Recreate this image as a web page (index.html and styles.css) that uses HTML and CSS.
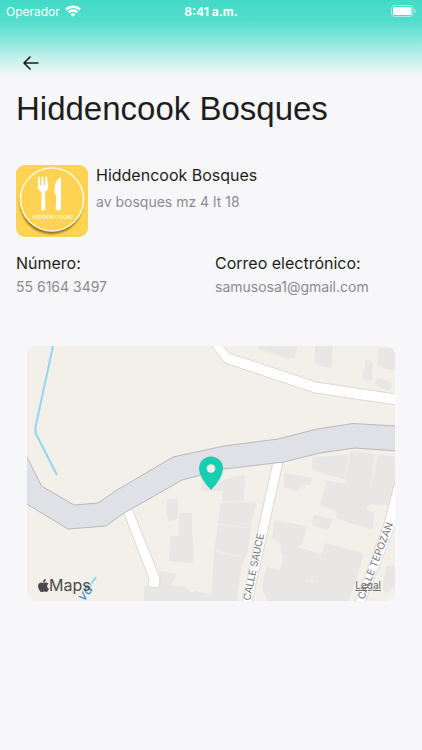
FILE: index.html
```html
<!DOCTYPE html>
<html lang="es">
<head>
<meta charset="utf-8">
<meta name="viewport" content="width=device-width, initial-scale=1">
<title>Hiddencook Bosques</title>
<link rel="stylesheet" href="styles.css">
</head>
<body>
<header class="top">
  <div class="status">
    <div class="carrier">
      <span>Operador</span>
      <svg width="16" height="12" viewBox="0 0 16 12" fill="none" stroke="#fff" stroke-width="2.4" aria-hidden="true">
        <path d="M1 4.6a10 10 0 0 1 14 0M3.6 7.3a6.2 6.2 0 0 1 8.8 0"/>
        <path d="M5.6 9.3a3.4 3.4 0 0 1 4.8 0L8 11.8z" fill="#fff" stroke="none"/>
      </svg>
    </div>
    <time class="clock">8:41 a.m.</time>
    <svg class="battery" width="25" height="12" viewBox="0 0 25 12" aria-hidden="true">
      <rect x=".5" y=".5" width="21.5" height="11" rx="3" fill="none" stroke="#fff" stroke-opacity=".5"/>
      <rect x="2" y="2" width="18.5" height="8" rx="1.6" fill="#fff"/>
      <path d="M23.3 4q1.4.6 1.4 2t-1.4 2z" fill="#fff" fill-opacity=".6"/>
    </svg>
  </div>
  <button class="back" type="button" aria-label="Volver">
    <svg width="16" height="14" viewBox="0 0 16 14" fill="none" stroke="#1c1c1e" stroke-width="1.6" stroke-linecap="round" stroke-linejoin="round"><path d="M15 7H1M7 1 1 7l6 6"/></svg>
  </button>
</header>
<main>
  <h1>Hiddencook Bosques</h1>
  <section class="place">
    <svg class="logo" width="72" height="72" viewBox="0 0 72 72" role="img" aria-label="Hidden Cook">
      <defs>
        <filter id="soft" x="-20%" y="-20%" width="140%" height="140%"><feGaussianBlur stdDeviation="1.3"/></filter>
        <clipPath id="tile"><rect width="72" height="72" rx="9"/></clipPath>
      </defs>
      <g clip-path="url(#tile)">
        <rect width="72" height="72" fill="#fed354"/>
        <circle cx="35.5" cy="37.5" r="31.5" fill="#8b6a10" filter="url(#soft)"/>
        <path d="M0 0h72v34H0z" fill="#fed354" opacity=".7"/>
        <circle cx="36" cy="34.5" r="31.5" fill="#fed354" stroke="#fff6d2" stroke-width="1.7"/>
      </g>
      <path fill="#fff" d="M22 12q.8-1.2 1.6 0l.5 8h1.2l.3-8q.9-1.2 1.8 0l.3 8h1.2l.5-8q.8-1.2 1.6 0l1.2 9.500q0 4.300-3.300 5.200l.6 17.500q-2.200 2.600-4.400 0l.6-17.500q-3.900-.9-3.900-5.200zM45 12q-6.500 2.500-6.700 15l2 4-.6 13.200q2.500 2.600 5.300 0z"/>
      <text class="logo-text" x="36.500" y="54" text-anchor="middle">HIDDEN COOK!</text>
    </svg>
    <div>
      <h2>Hiddencook Bosques</h2>
      <p>av bosques mz 4 lt 18</p>
    </div>
  </section>
  <dl class="contact">
    <div><dt>Número:</dt><dd>55 6164 3497</dd></div>
    <div><dt>Correo electrónico:</dt><dd>samusosa1@gmail.com</dd></div>
  </dl>
  <section class="map" aria-label="Mapa">
    <svg class="streets" viewBox="27 346 368 255">
      <rect x="27" y="346" width="368" height="255" fill="#f3f0e9"/>
      <g fill="#e9e7e5" stroke="#e9e7e5" stroke-width="4" stroke-linejoin="round">
        <path d="M260 347h35l-2 9-6 0zM317 347h14l-1 19-13-3zM380 350h13v18l-14-3zM367 362l4 2-1 15-5-1zM379 380l12 4-3 4-11-4z"/>
        <path d="M225 482l18-5-1 22-18 1zM222 505l32-1-4 16-4 30-7 18-4 33h-22l3-49 4-27zM203 472h17l1 17h-17z"/>
        <path d="M169 501h7v16l-6 2-1-7zM181 515h9v21h-9zM172 538h19v23l-20-2zM161 573l13 2-5 11-8-2zM146 588h38l7 7 5-2 16 4v6h-66z"/>
        <path d="M286 475l24 4-1 4-11 1-1 5-11-3zM314 459l32-2-1 20-31-8zM352 453l21 3-2 32-24-3zM379 457l17 2v20l-8 24-20-1-5 8 9 4-1 13-33-10 1-8-17-5 6-21 46 6z"/>
        <path d="M276 522l29 6-4 14-7 5-20-9zM315 517l15 4-3 7-13-4zM283 544l39 13 5-12 34 10-2 9-13 39h-75l-7-15 4-19 14 4 3-17-3-6zM388 568l6-1v18l-8 6-1-5z"/>
      </g>
      <g fill="none" stroke="#f1eee9" stroke-width="1"><path d="M218 524l30 4M216 551l26 6M349 456l-5 28M375 457l-4 31M312 575v11M307 581h11M322 557l-2 3"/></g>
      <path d="M53 346L35.500 427v6L57 475" fill="none" stroke="#8fd7f2" stroke-width="2"/>
      <g fill="#fff" stroke="#d5d2ce" stroke-width=".8">
        <path d="M211 345l14 18 90 30 81 12V394l-80-12-87-29-7-8z"/>
        <path d="M123 511l26 68-1 8 11 1 1-10-29-72z"/>
        <path d="M273 462l-31 140h10l31-140z"/>
        <path d="M396 478l-12 46-29 78h10l31-78z"/>
      </g>
      <path d="M26 455l15.500 31L74 505l24-2 19-13 56-33 51-11 54-7 39-10 36-5.500 43 2.500v25l-41-3-35 5-36 9-60 7-42 11-26 15-32 18-18 13-38 3-43-26z" fill="#e0e1e6" stroke="#b9b9bc" stroke-width="1"/>
      <path d="M96 577l-9 13" stroke="#8fd7f2" stroke-width="2"/>
      <g class="street-name">
        <text transform="translate(250 601) rotate(-78)">CALLE SAUCE</text>
        <text transform="translate(364 600) rotate(-69)">CALLE TEPOZÁN</text>
        <text class="river" transform="translate(84 602) rotate(-54)">va</text>
      </g>
      <path d="M211 490q-12-12.500-12-21.500a12 12 0 0 1 24 0q0 9-12 21.500z" fill="#18cdb0"/>
      <circle cx="211" cy="468.500" r="4.300" fill="#eeeeeb"/>
    </svg>
    <div class="map-footer">
      <span class="brand"><svg width="11" height="13" viewBox="0 0 22 26" fill="#4b4b4d" aria-hidden="true"><path d="M15.500 0q.4 3-1.500 5t-4 2q-.4-3 1.500-5t4-2zM11 8q1 0 3-.8 4.500-1.300 7 2.300-3 2-2.800 5 .2 3.600 3.800 5-2 6-5 6.500-1.200 0-2.500-.6-2.300-.9-4.300 0Q7 26.800 5 25.400 0 20.800 0 14.500q.2-6.500 6-7.500 1.200-.1 3 .6 1.500.5 2 .4z"/></svg>Maps</span>
      <a href="#">Legal</a>
    </div>
  </section>
</main>
</body>
</html>
```
FILE: styles.css
```css
* { box-sizing: border-box; }
body {
  margin: 0;
  min-height: 100vh;
  background: #f7f7fa;
  color: #1e1e20;
  font-family: Inter, "Liberation Sans", sans-serif;
}
h1, h2, p, dl, dd { margin: 0; font-weight: 400; }
.top {
  background: linear-gradient(#43dac7 0, #50ddcb 20px, #87e8db 40px, #c3f0eb 58px, #eef5f7 74px, #f7f7fa 84px);
}
.status {
  display: grid;
  grid-template-columns: 1fr auto 1fr;
  align-items: center;
  height: 22px;
  padding: 0 6px;
  color: #fff;
  font-size: 12px;
}
.carrier { display: flex; align-items: center; gap: 5px; }
.clock { font-weight: 700; }
.battery { justify-self: end; }
.back {
  display: flex;
  align-items: center;
  justify-content: center;
  width: 32px;
  height: 32px;
  margin: 25px 0 0 15px;
  padding: 0;
  border: 0;
  background: none;
}
main { padding: 8px 16px 24px; }
h1 { font-family: "Liberation Sans", sans-serif; font-size: 33px; line-height: 44px; }
.place {
  display: flex;
  gap: 8px;
  margin-top: 34px;
}
.logo { flex: none; }
.logo-text { fill: #fff3c4; font: 700 6px Roboto, sans-serif; }
h2, dt { font-size: 16px; line-height: 20px; }
p, dd { color: #8c8c90; font-size: 14px; line-height: 24px; }
.place p { margin-top: 5px; }
.contact {
  display: grid;
  grid-template-columns: 1fr 1fr;
  gap: 8px;
  margin-top: 16px;
}
.contact dd { margin-top: 2px; }
.map {
  position: relative;
  margin: 47px 11px 0;
  overflow: hidden;
  border-radius: 9px;
}
.streets { display: block; width: 100%; }
.street-name { fill: #78787b; font-size: 10px; }
.street-name text { paint-order: stroke; stroke: #fff; stroke-width: 1px; }
.street-name .river { fill: #4b86c6; stroke: none; font-size: 14px; font-style: italic; }
.map-footer {
  position: absolute;
  inset: auto 14px 6px 11px;
  display: flex;
  align-items: center;
  justify-content: space-between;
}
.brand { display: flex; align-items: center; color: #4b4b4d; font-size: 16px; }
.map-footer a { color: #6d6d70; font-size: 10px; }
```
